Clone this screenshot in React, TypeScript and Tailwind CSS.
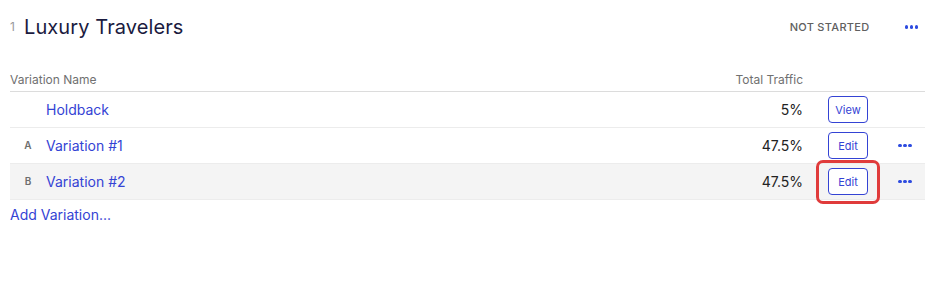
const FONT = { fontFamily: 'Inter, "Noto Sans", sans-serif' }

interface Row {
  letter: string
  name: string
  traffic: string
  action: 'View' | 'Edit'
  menu: boolean
  highlight?: boolean
  active?: boolean
}

const ROWS: Row[] = [
  { letter: '', name: 'Holdback', traffic: '5%', action: 'View', menu: false },
  { letter: 'A', name: 'Variation #1', traffic: '47.5%', action: 'Edit', menu: true },
  { letter: 'B', name: 'Variation #2', traffic: '47.5%', action: 'Edit', menu: true, highlight: true, active: true },
]

function Dots({ className = '' }: { className?: string }) {
  return (
    <span className={`flex gap-[1.5px] ${className}`}>
      <span className="w-[3.5px] h-[3.5px] rounded-full bg-[#2d4be0]" />
      <span className="w-[3.5px] h-[3.5px] rounded-full bg-[#2d4be0]" />
      <span className="w-[3.5px] h-[3.5px] rounded-full bg-[#2d4be0]" />
    </span>
  )
}

export default function App() {
  return (
    <div className="w-[940px] h-[288px] bg-white" style={FONT}>
      <div className="w-[925px] pl-[10px]">
        <div className="flex items-center h-[28px] mt-[13px]">
          <span className="w-[14px] text-[12px] text-[#9a9a9a]">1</span>
          <h2 className="text-[20px] text-[#1b1b3f] tracking-[0.1px]">Luxury Travelers</h2>
          <span className="ml-auto text-[11px] font-medium text-[#606060] tracking-[0.3px]">NOT STARTED</span>
          <Dots className="ml-[35px] mr-[7px]" />
        </div>

        <div className="flex items-end h-[23px] pb-[2px] mt-[28px] border-b border-[#dcdcdc] text-[12px] text-[#707070] leading-[18px]">
          <span>Variation Name</span>
          <span className="ml-auto mr-[122px]">Total Traffic</span>
        </div>

        {ROWS.map(row => (
          <div
            key={row.name}
            className={`flex items-center h-[36px] border-b border-[#ececec] ${row.active ? 'bg-[#f4f4f4]' : ''}`}
          >
            <span className="w-[36px] text-center text-[10px] font-semibold text-[#6e6e6e]">{row.letter}</span>
            <span className="flex-1 text-[14px] text-[#3443d4]">{row.name}</span>
            <span className="text-[14px] text-[#222]">{row.traffic}</span>
            <span className="relative ml-[25px]">
              <button className="w-[40px] h-[27px] rounded-[4px] border border-[#3443d4] text-[11px] text-[#3443d4] bg-white">
                {row.action}
              </button>
              {row.highlight && (
                <span className="absolute -left-[12px] -right-[12px] -top-[8px] -bottom-[9px] border-[3px] border-[#e03b3b] rounded-[7px]" />
              )}
            </span>
            <span className="w-[57px] flex">
              {row.menu && <Dots className="ml-[30px]" />}
            </span>
          </div>
        ))}

        <div className="mt-[5px] text-[14px] leading-[20px] text-[#3443d4]">Add Variation...</div>
      </div>
    </div>
  )
}
